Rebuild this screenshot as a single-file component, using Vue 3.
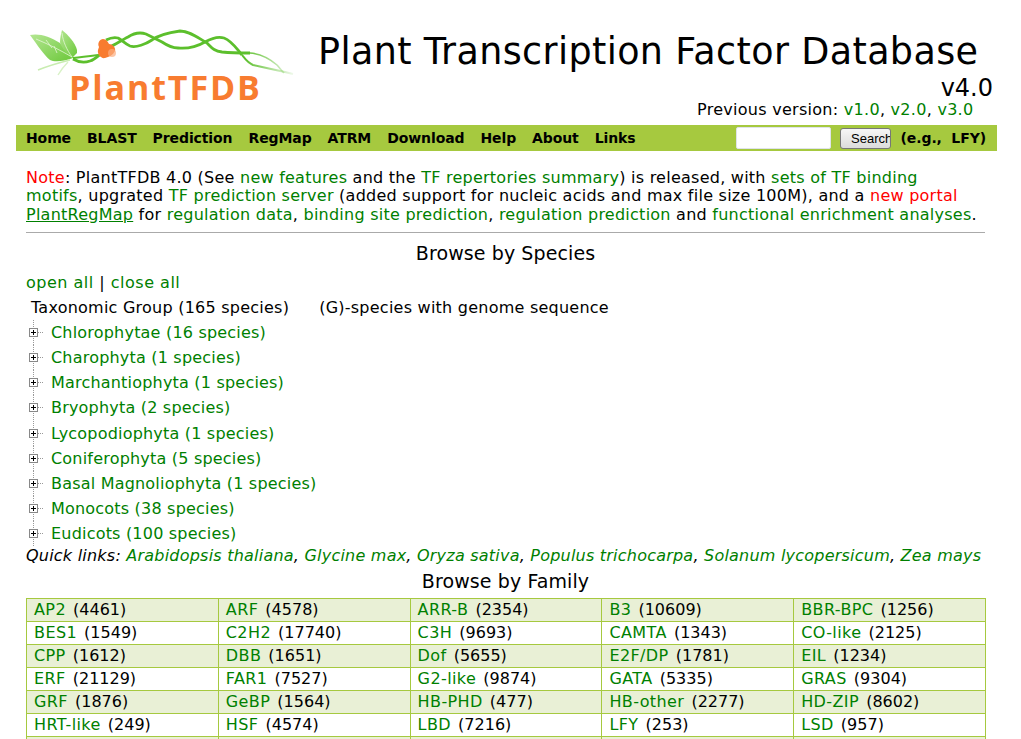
<script setup>
const menu = ['Home','BLAST','Prediction','RegMap','ATRM','Download','Help','About','Links']
const groups = ['Chlorophytae (16 species)','Charophyta (1 species)','Marchantiophyta (1 species)','Bryophyta (2 species)','Lycopodiophyta (1 species)','Coniferophyta (5 species)','Basal Magnoliophyta (1 species)','Monocots (38 species)','Eudicots (100 species)']
const quick = ['Arabidopsis thaliana','Glycine max','Oryza sativa','Populus trichocarpa','Solanum lycopersicum','Zea mays']
const rows = [
 [['AP2','4461'],['ARF','4578'],['ARR-B','2354'],['B3','10609'],['BBR-BPC','1256']],
 [['BES1','1549'],['C2H2','17740'],['C3H','9693'],['CAMTA','1343'],['CO-like','2125']],
 [['CPP','1612'],['DBB','1651'],['Dof','5655'],['E2F/DP','1781'],['EIL','1234']],
 [['ERF','21129'],['FAR1','7527'],['G2-like','9874'],['GATA','5335'],['GRAS','9304']],
 [['GRF','1876'],['GeBP','1564'],['HB-PHD','477'],['HB-other','2277'],['HD-ZIP','8602']],
 [['HRT-like','249'],['HSF','4574'],['LBD','7216'],['LFY','253'],['LSD','957']],
]
</script>

<template>
  <div class="page">
    <header class="head">
      <svg class="logo" width="300" height="110" viewBox="0 0 300 110">
        <defs>
          <linearGradient id="leaf" x1="0" y1="0" x2="1" y2="1">
            <stop offset="0" stop-color="#b4e692"/><stop offset="1" stop-color="#6cc83a"/>
          </linearGradient>
          <linearGradient id="fade" gradientUnits="userSpaceOnUse" x1="245" y1="0" x2="293" y2="0">
            <stop offset="0" stop-color="#5cbf2c"/><stop offset="1" stop-color="#5cbf2c" stop-opacity="0.1"/>
          </linearGradient>
          <linearGradient id="fade2" gradientUnits="userSpaceOnUse" x1="245" y1="0" x2="285" y2="0">
            <stop offset="0" stop-color="#5cbf2c"/><stop offset="1" stop-color="#5cbf2c" stop-opacity="0.25"/>
          </linearGradient>
        </defs>
        <path d="M30 35 C38 33 50 36 60 43 C66 48 71 53 73 58 C62 62 54 62 50 60 C44 55 38 46 30 35Z" fill="url(#leaf)"/>
        <path d="M62 30 C68 35 75 42 77 50 L77 53 L72 58 C64 52 60 44 60 42 C60 38 61 34 62 30Z" fill="url(#leaf)"/>
        <path d="M36 39 C48 44 60 50 72 57M62 33 C63 42 67 50 72 57M46 40 L52 48M54 46 L57 53" stroke="#e4f6d6" stroke-width="0.8" fill="none"/>
        <path d="M70 60 C58 63 48 66 38 70" stroke="#c8ecb0" stroke-width="1.4" fill="none"/>
        <path d="M68 62 C64 66 61 70 58 75" stroke="#d8f2c6" stroke-width="1.4" fill="none"/>
        <path d="M73 58 C82 57 90 56 98 55" stroke="#5cbf2c" stroke-width="1.8" fill="none"/>
        <path d="M73 59 C78 62 84 63 90 61 C95 60 100 54 108 48 C116 44 122 40 128 37 C134 33 140 32 146 34 C152 37 158 40 162 42 C168 46 172 48 178 48 C188 49 198 46 205 42 C212 38 218 36 224 38 C232 41 236 48 242 55" stroke="#5cbf2c" stroke-width="2.8" fill="none"/>
        <path d="M106 40 C110 38 114 37 118 38 C122 40 125 44 130 46 C136 48 146 44 152 40 C156 37 166 33 180 31 C190 31 198 38 207 43 C212 48 214 51 222 52 C232 53 240 53 250 53" stroke="#5cbf2c" stroke-width="2.8" fill="none"/>
        <path d="M242 55 C246 60 248 63 253 65 C262 67 276 70 293 74" stroke="url(#fade)" stroke-width="2" fill="none"/>
        <path d="M250 53 C262 54 270 59 277 65 C279 67 281 70 284 73" stroke="url(#fade2)" stroke-width="1.6" fill="none"/>
        <path d="M99 47 C97 43 100 39 103 39 C106 39 108 42 109 44 C113 44 116 48 115 51 C113 55 109 57 105 58 C101 59 97 54 98 50Z" fill="#f87c30"/>
        <circle cx="112" cy="53" r="4" fill="#fbae80" opacity="0.7"/>
        <text x="69" y="100" class="logotext">PlantTFDB</text>
      </svg>
      <div class="titles">
        <h1 class="title">Plant Transcription Factor Database</h1>
        <div class="ver">v4.0</div>
        <div class="prev">Previous version: <a>v1.0</a>, <a>v2.0</a>, <a>v3.0</a></div>
      </div>
    </header>

    <nav class="nav">
      <a v-for="m in menu" :key="m" class="navlink">{{ m }}</a>
      <span class="navsearch">
        <input class="box" type="text" />
        <button class="btn" type="button">Search</button>
        <b class="eg">(e.g., &nbsp;LFY)</b>
      </span>
    </nav>

    <main class="main">
      <p class="note">
        <span class="red">Note</span>: PlantTFDB 4.0 (See <a>new features</a> and the <a>TF repertories summary</a>) is released, with <a>sets of TF binding<br />motifs</a>, upgrated <a>TF prediction server</a> (added support for nucleic acids and max file size 100M), and a <span class="red">new portal</span><br /><a class="ul">PlantRegMap</a> for <a>regulation data</a>, <a>binding site prediction</a>, <a>regulation prediction</a> and <a>functional enrichment analyses</a>.
      </p>
      <hr class="rule" />
      <h2 class="h h1st">Browse by Species</h2>
      <div class="openclose"><a>open all</a> | <a>close all</a></div>
      <div class="taxhead"><span>Taxonomic Group (165 species)</span><span class="gs">(G)-species with genome sequence</span></div>
      <ul class="tree">
        <li v-for="g in groups" :key="g" class="treerow">
          <svg class="plus" width="14" height="25" viewBox="0 0 14 25">
            <path d="M4.5 0V25M9 12.5H14" stroke="#999" stroke-dasharray="1 1" fill="none"/>
            <rect x="0.5" y="8.5" width="8" height="8" fill="#fff" stroke="#888"/>
            <path d="M2 12.5H7M4.5 10V15" stroke="#000" fill="none"/>
          </svg>
          <a>{{ g }}</a>
        </li>
      </ul>
      <div class="quick"><i>Quick links: </i><template v-for="(q,i) in quick" :key="q"><i><a>{{ q }}</a></i><i v-if="i < quick.length - 1">, </i></template></div>
      <h2 class="h h2nd">Browse by Family</h2>
      <table class="fam">
        <tbody>
          <tr v-for="(r,i) in rows" :key="i" :class="{ odd: i % 2 === 0 }">
            <td v-for="c in r" :key="c[0]"><a>{{ c[0] }}</a> ({{ c[1] }})</td>
          </tr>
          <tr class="odd"><td v-for="n in 5" :key="n">&nbsp;</td></tr>
        </tbody>
      </table>
    </main>
  </div>
</template>

<style>
html, body { margin: 0; height: 739px; overflow: hidden; background: #fff; }
</style>

<style scoped>
.page { width: 1021px; height: 739px; overflow: hidden; font-family: "DejaVu Sans", Verdana, sans-serif; font-size: 16px; letter-spacing: 0.28px; color: #000; position: relative; }
a { color: #008000; }
.head { display: flex; height: 125px; }
.logo { flex: none; display: block; }
.logotext { font-family: "Open Sans", "DejaVu Sans", sans-serif; font-weight: 700; font-size: 34px; letter-spacing: 1.9px; fill: #f87c30; }
.titles { margin-left: 18px; width: 675px; }
.title { margin: 29px 0 0; font-size: 36.5px; letter-spacing: 0.37px; font-weight: 400; line-height: 46px; white-space: nowrap; }
.ver { text-align: right; font-size: 24px; letter-spacing: 0; line-height: 26px; }
.prev { margin-left: 379px; margin-top: -1px; line-height: 20px; white-space: nowrap; }
.nav { margin: 0 24px 0 16px; height: 26px; background: #a6c93f; display: flex; align-items: center; padding-left: 10px; font-size: 14px; letter-spacing: -0.1px; font-weight: 700; gap: 16px; }
.navlink { color: #000; }
.navsearch { margin-left: auto; display: flex; align-items: center; margin-right: 11px; letter-spacing: 0; }
.box { width: 95px; height: 22px; box-sizing: border-box; border: 1px solid #dfe3ea; border-radius: 2px; padding: 0; background: #fff; margin-right: 9px; }
.btn { width: 51px; height: 21px; padding: 0 0 0 10px; text-align: left; overflow: hidden; white-space: nowrap; border: 1px solid #777; border-radius: 3px; background: linear-gradient(#f6f6f6, #dcdcdc); font-family: "Liberation Sans", sans-serif; font-size: 13px; font-weight: 400; color: #000; margin-right: 9.5px; }
.eg { white-space: nowrap; letter-spacing: -0.1px; }
.main { padding: 17.5px 36px 0 26px; }
.note { margin: 0; line-height: 18.5px; letter-spacing: 0.25px; white-space: nowrap; }
.red { color: #f00; }
.ul { text-decoration: underline; }
.rule { margin: 8px 0 0; border: 0; border-top: 1px solid #aaa; }
.h { margin: 0; font-size: 19px; letter-spacing: 0.1px; font-weight: 400; text-align: center; line-height: 24px; }
.h1st { margin-top: 8px; }
.openclose { margin-top: 7px; line-height: 22px; letter-spacing: 0.5px; }
.taxhead { display: flex; gap: 30px; padding-left: 5px; margin-top: 3px; line-height: 22px; letter-spacing: 0.24px; }
.tree { list-style: none; margin: 1px 0 0; padding: 0; letter-spacing: 0.2px; }
.treerow { height: 25.15px; display: flex; align-items: center; gap: 8px; padding-left: 3px; }
.plus { flex: none; }
.quick { font-size: 16px; line-height: 20px; white-space: nowrap; margin-top: -0.55px; letter-spacing: 0.22px; }
.h2nd { margin-top: 3px; }
.fam { width: 960px; border-collapse: collapse; table-layout: fixed; margin-top: 5px; font-size: 16px; letter-spacing: 0; word-spacing: 2px; }
.fam a { letter-spacing: 0.4px; }
.fam td { border: 1px solid #a6c93f; height: 22px; padding: 0 0 0 7px; line-height: 22px; white-space: nowrap; }
.odd td { background: #e9f0d6; }
</style>
